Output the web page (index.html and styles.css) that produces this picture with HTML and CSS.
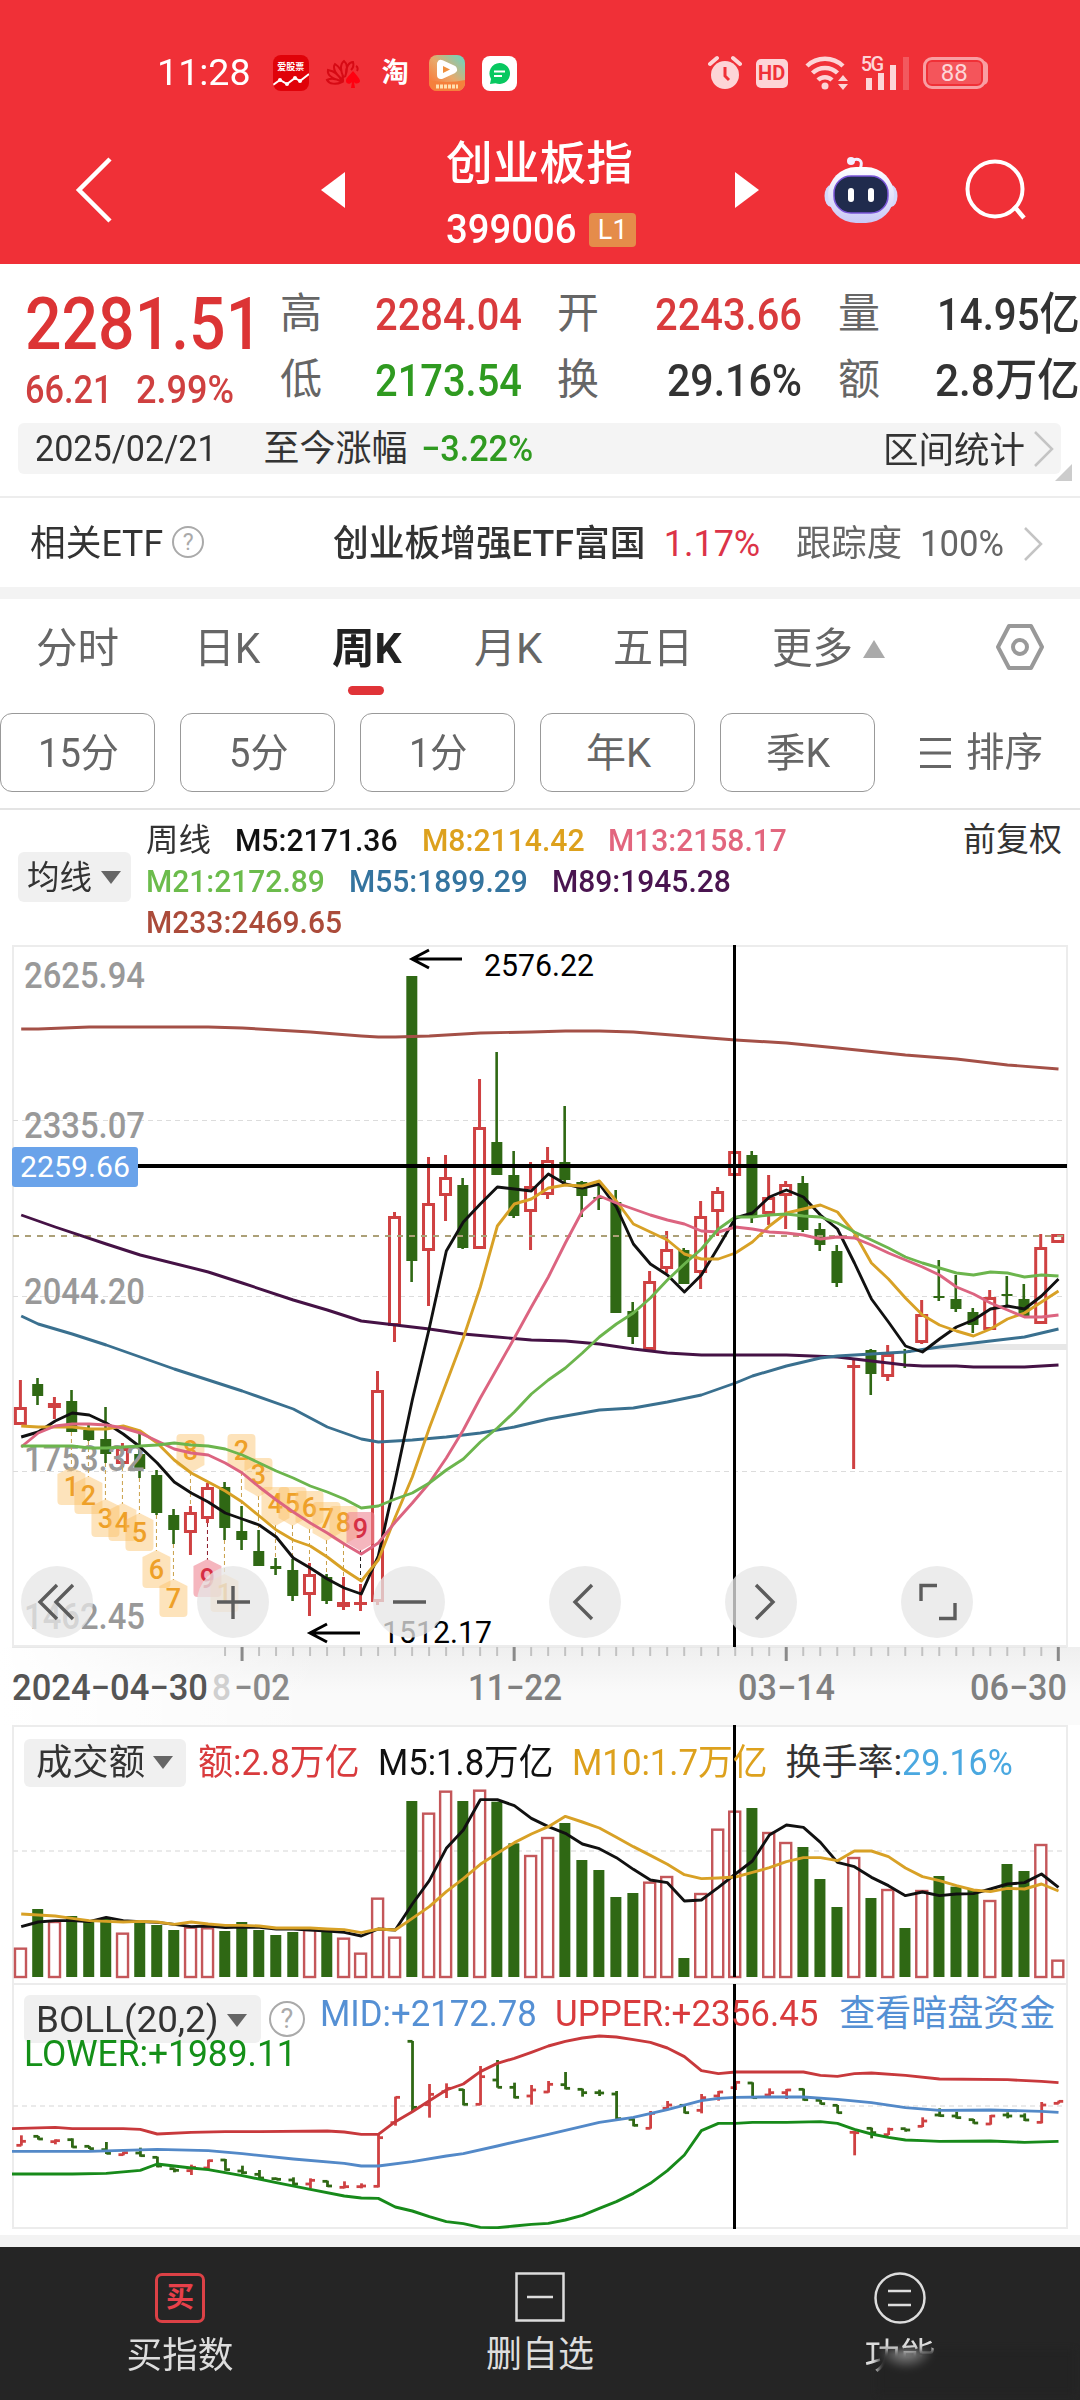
FILE: index.html
```html
<!DOCTYPE html>
<html lang="zh-CN">
<head>
<meta charset="utf-8">
<title>创业板指 399006</title>
<link rel="stylesheet" href="styles.css">
</head>
<body>
<header class="top">
  <div class="status">
    <span class="clock" data-w="94">11:28</span>
    <span class="app app-stock"><b>爱股票</b><svg width="36" height="18" viewBox="0 0 36 18"><path d="M0 13l7-5 7 4 8-6 5 3 9-7" fill="none" stroke="#fff" stroke-width="2"/><g fill="#fff"><circle cx="7" cy="8" r="2"/><circle cx="14" cy="12" r="2"/><circle cx="22" cy="6" r="2"/><circle cx="27" cy="9" r="2"/></g></svg></span>
    <svg class="petals" width="36" height="30" viewBox="0 0 36 30" fill="none" stroke="#d60a14" stroke-width="2"><path d="M17 24C11 27 4 26 2 22c4-2 10-1 15 2ZM17 23C8 21 2 17 3 12c6 1 11 5 14 11ZM18 22C11 17 7 10 10 6c5 3 8 9 8 16ZM19 20C15 13 15 6 19 3c4 3 4 8 1 16M21 15C21 9 24 4 28 4c1 3 0 6-2 8M31 8c2 1 2 3 1 5"/><path d="M28 13c-5 6-7 7-7 10s4 4 6 1l-1 6h4l-1-6c2 3 6 1 6-1s-2-4-7-10Z" fill="#ff0010" stroke="none"/></svg>
    <b class="tao">淘</b>
    <svg class="video" width="36" height="36" viewBox="0 0 36 36"><defs><linearGradient id="vg" x1="0" y1="1" x2="1" y2="0"><stop offset="0" stop-color="#ff6a2a"/><stop offset=".5" stop-color="#e9a86a"/><stop offset="1" stop-color="#62d8c8"/></linearGradient></defs><rect width="36" height="36" rx="8" fill="url(#vg)"/><path d="M0 25q18 4 36 0v3a8 8 0 0 1-8 8H8a8 8 0 0 1-8-8Z" fill="#f5803c"/><path d="M12 9v11l12-5.500Z" fill="none" stroke="#fff" stroke-width="8" stroke-linejoin="round"/><path d="M14 11v7l7-3.500Z" fill="#f0903e"/><path d="M7 31.500h22" stroke="#ffe0b0" stroke-width="4" stroke-dasharray="3 1"/></svg>
    <svg class="msg" width="35" height="35" viewBox="0 0 35 35"><rect width="35" height="35" rx="8" fill="#fff"/><path d="M17.500 7a10.500 10.500 0 1 1-4 20.200L8 28l1-5A10.500 10.500 0 0 1 17.500 7Z" fill="#07c860"/><path d="M12 15.500h11M12 20h8" stroke="#fff" stroke-width="2"/></svg>
    <div class="sys">
      <svg width="34" height="36" viewBox="0 0 34 36"><circle cx="17" cy="20" r="14" fill="#fdd5d7"/><path d="M2 9l7-6M32 9l-7-6" stroke="#fdd5d7" stroke-width="4" stroke-linecap="round"/><path d="M17 12v9l4 4" fill="none" stroke="#f03037" stroke-width="3"/></svg>
      <span class="hd">HD</span>
      <svg width="44" height="36" viewBox="0 0 44 36" fill="none" stroke="#fdd5d7" stroke-width="4.500"><path d="M2 11a26 26 0 0 1 36 0M7.500 18a18 18 0 0 1 25 0M13 25a10 10 0 0 1 14 0"/><circle cx="20" cy="31" r="3.500" fill="#fdd5d7" stroke="none"/><path d="M33 26l5-6 5 6ZM33 29l5 6 5-6Z" fill="#fdd5d7" stroke="none"/></svg>
      <div class="signal"><span>5G</span><svg width="48" height="36" viewBox="0 0 48 36" fill="#fdd5d7"><path d="M5 23h6v12H5zM17 18h6v17h-6zM29 10h6v25h-6z"/><path d="M42 2h6v33h-6z" opacity=".25"/></svg></div>
      <span class="battery">88</span>
    </div>
  </div>
  <nav class="nav">
    <svg class="back" width="38" height="66" viewBox="0 0 38 66"><path d="M35 2L4 33l31 31" fill="none" stroke="#fff" stroke-width="4.500"/></svg>
    <svg class="prev" width="24" height="36" viewBox="0 0 24 36"><path d="M24 0v36L0 18Z" fill="#fff"/></svg>
    <div class="title"><h1 data-w="187">创业板指</h1><div class="code"><span data-w="130">399006</span><i>L1</i></div></div>
    <svg class="next" width="24" height="36" viewBox="0 0 24 36"><path d="M0 0v36l24-18Z" fill="#fff"/></svg>
    <svg class="bot" width="74" height="68" viewBox="0 0 74 68"><defs><linearGradient id="bg" x1="0" y1="0" x2="0" y2="1"><stop offset="0" stop-color="#fff"/><stop offset="1" stop-color="#c9c8f6"/></linearGradient></defs><path d="M36 13c4-9-2-12-9-8" fill="none" stroke="#f3efff" stroke-width="3"/><circle cx="27" cy="5" r="4" fill="#f3efff"/><ellipse cx="7" cy="40" rx="6.500" ry="11" fill="#d5d8fb"/><ellipse cx="67" cy="40" rx="6.500" ry="11" fill="#d5d8fb"/><rect x="4" y="11" width="66" height="56" rx="28" fill="url(#bg)"/><rect x="10" y="20" width="54" height="37" rx="17" fill="#202b4d" stroke="#7a55d8" stroke-width="1.500"/><rect x="24" y="32" width="6" height="14" rx="3" fill="#fff"/><rect x="44" y="32" width="6" height="14" rx="3" fill="#fff"/></svg>
    <svg class="find" width="64" height="62" viewBox="0 0 64 62"><path d="M49 47l10 12" stroke="#fff" stroke-width="4.500"/><circle cx="30" cy="30" r="27.500" fill="none" stroke="#fff" stroke-width="4"/></svg>
  </nav>
</header>

<section class="quote">
  <div class="last"><strong data-w="237">2281.51</strong><div class="chg"><span data-w="88">66.21</span><span data-w="98">2.99%</span></div></div>
  <div class="stats">
    <label>高</label><span class="up" data-w="147">2284.04</span><label>开</label><span class="up" data-w="147">2243.66</span><label>量</label><span data-w="143">14.95亿</span>
    <label>低</label><span class="down" data-w="147">2173.54</span><label>换</label><span data-w="135">29.16%</span><label>额</label><span data-w="145">2.8万亿</span>
  </div>
</section>
<section class="range">
  <span data-w="182">2025/02/21</span><span data-w="144">至今涨幅</span><span class="down" data-w="112">−3.22%</span><span data-w="142">区间统计</span>
  <svg width="22" height="36" viewBox="0 0 22 36"><path d="M2 1l17 17L2 35" fill="none" stroke="#c4c4c4" stroke-width="2.500"/></svg>
  <svg class="corner" width="17" height="17" viewBox="0 0 17 17"><path d="M17 0v17H0Z" fill="#ccc"/></svg>
</section>
<section class="etf">
  <span data-w="133">相关ETF</span><span class="help">?</span><b data-w="312">创业板增强ETF富国</b><span class="pct" data-w="97">1.17%</span><span class="dim" data-w="106">跟踪度</span><span class="dim" data-w="84">100%</span>
  <svg width="20" height="34" viewBox="0 0 20 34"><path d="M2 1l16 16L2 33" fill="none" stroke="#c4c4c4" stroke-width="2.500"/></svg>
</section>
<section class="tabs">
  <span data-w="83">分时</span><span data-w="66">日K</span><b class="on"><span data-w="70">周K</span></b><span data-w="68">月K</span><span data-w="80">五日</span><span data-w="81">更多</span>
  <svg width="22" height="18" viewBox="0 0 22 18"><path d="M11 0l11 18H0Z" fill="#aaa"/></svg>
  <svg width="48" height="48" viewBox="0 0 48 48" fill="none" stroke="#999" stroke-width="4"><path d="M13 3h22l11 21-11 21H13L2 24Z" stroke-linejoin="round"/><circle cx="24" cy="24" r="7"/></svg>
</section>
<section class="chips">
  <div class="chip"><span data-w="81">15分</span></div><div class="chip"><span data-w="59">5分</span></div><div class="chip"><span data-w="58">1分</span></div><div class="chip"><span data-w="65">年K</span></div><div class="chip"><span data-w="64">季K</span></div>
  <div class="sort"><svg width="31" height="30" viewBox="0 0 31 30"><path d="M0 1.500h31M0 15h31M0 28.500h31" stroke="#666" stroke-width="3"/></svg><span data-w="77">排序</span></div>
</section>
<section class="legend">
  <div class="pick"><span data-w="65">均线</span><i></i></div>
  <div class="mas">
    <p><span class="c-txt" data-w="65">周线</span><span class="c-m5" data-w="163">M5:2171.36</span><span class="c-m8" data-w="163">M8:2114.42</span><span class="c-m13" data-w="179">M13:2158.17</span></p>
    <p><span class="c-m21" data-w="179">M21:2172.89</span><span class="c-m55" data-w="179">M55:1899.29</span><span class="c-m89" data-w="179">M89:1945.28</span></p>
    <p><span class="c-m233" data-w="196">M233:2469.65</span></p>
  </div>
  <span class="adj" data-w="99">前复权</span>
</section>

<section class="panel price">
  <svg id="price" width="1080" height="702" viewBox="0 945 1080 702"></svg>
  <i class="cross"></i>
  <div class="tools">
    <button><svg viewBox="0 0 72 72"><path d="M36 19L19 36l17 17M52 19L35 36l17 17"/></svg></button>
    <button><svg viewBox="0 0 72 72"><path d="M36 20v33M20 36h33"/></svg></button>
    <button><svg viewBox="0 0 72 72"><path d="M20 36h33"/></svg></button>
    <button><svg viewBox="0 0 72 72"><path d="M43 19L26 36l17 17"/></svg></button>
    <button><svg viewBox="0 0 72 72"><path d="M31 19l17 17-17 17"/></svg></button>
    <button><svg viewBox="0 0 72 72"><path d="M20 35V19.500h16M38 52.500h16V37"/></svg></button>
  </div>
</section>
<svg id="axis" class="axis" width="1080" height="78" viewBox="0 1647 1080 78"></svg>
<section class="panel volume">
  <svg id="volume" width="1080" height="259" viewBox="0 0 1080 259"></svg>
  <div class="head">
    <div class="pick"><span data-w="109">成交额</span><i></i></div><span class="c-up" data-w="162">额:2.8万亿</span><span class="c-m5" data-w="175">M5:1.8万亿</span><span class="c-m8" data-w="196">M10:1.7万亿</span><span class="c-txt" data-w="117">换手率:</span><span class="c-sky" data-w="111">29.16%</span>
  </div>
  <i class="cross"></i>
</section>
<section class="panel boll">
  <svg id="boll" width="1080" height="245" viewBox="0 0 1080 245"></svg>
  <div class="head">
    <div class="pick"><span data-w="183">BOLL(20,2)</span><i></i></div><span class="help">?</span><span class="c-blue" data-w="217">MID:+2172.78</span><span class="c-up" data-w="263">UPPER:+2356.45</span><span class="c-blue" data-w="216">查看暗盘资金</span>
    <span class="lower" data-w="273">LOWER:+1989.11</span>
  </div>
  <i class="cross"></i>
</section>
<footer class="bar">
  <div><span class="buy">买</span><em data-w="107">买指数</em></div>
  <div><svg width="50" height="50" viewBox="0 0 50 50"><path d="M1.500 1.500h47v47h-47zM12 25h26" fill="none" stroke="#ddd" stroke-width="2.500"/></svg><em data-w="108">删自选</em></div>
  <div><svg width="52" height="52" viewBox="0 0 52 52"><circle cx="26" cy="26" r="24.500" fill="none" stroke="#ddd" stroke-width="2.500"/><path d="M14 19h23M14 33h23" stroke="#ddd" stroke-width="2.500"/></svg><em data-w="71">功能</em><i class="smudge"></i></div>
</footer>
<script src="app.js"></script>
</body>
</html>
```
FILE: styles.css
```css
* { box-sizing: border-box; }
body { margin: 0; width: 1080px; height: 2400px; overflow: hidden; background: #fff; color: #333; font-family: Roboto, "Noto Sans CJK SC", sans-serif; font-size: 36px; line-height: 1; }
h1, p { margin: 0; font-weight: 400; }
i, em { font-style: normal; }
svg { display: block; flex: none; }
[data-w] { display: inline-block; white-space: nowrap; transform-origin: 0 50%; flex: none; }

.c-txt { color: #333; } .c-m5 { color: #111; } .c-m8 { color: #dda11d; } .c-m13 { color: #e2667e; }
.c-m21 { color: #6cbc4c; } .c-m55 { color: #34749f; } .c-m89 { color: #4a1450; } .c-m233 { color: #ab4b3a; }
.c-up, .up { color: #d93b3d; } .down { color: #2f9a20; } .c-blue { color: #5590d4; } .c-sky { color: #4aa8e0; }

.top { height: 264px; background: #f03037; color: #fff; }
.status { height: 129px; padding: 17px 0 0 157px; display: flex; align-items: center; }
.clock { font-size: 36px; font-weight: 400; }
.app-stock { width: 36px; height: 36px; margin-left: 22px; border-radius: 8px; background: #e00209; display: flex; flex-direction: column; align-items: center; overflow: hidden; padding-top: 7px; }
.app-stock b { font-size: 9px; line-height: 10px; white-space: nowrap; }
.petals { margin-left: 16px; }
.tao { margin-left: 21px; font-size: 27px; width: 27px; }
.video { margin-left: 20px; }
.msg { margin-left: 17px; }
.sys { margin-left: 191px; display: flex; align-items: center; color: #fdd5d7; }
.hd { margin: 0 17px 0 14px; width: 32px; height: 29px; border-radius: 5px; background: #fdd5d7; color: #f03037; font: 700 20px/29px Roboto, sans-serif; text-align: center; }
.signal { display: flex; margin-left: 12px; width: 48px; }
.signal span { width: 0; font-size: 20px; line-height: 18px; letter-spacing: -1.5px; white-space: nowrap; font-weight: 500; }
.battery { margin-left: 14px; width: 63px; height: 32px; border: 3px solid #f99ea2; border-radius: 9px; background: #f4555b; background-clip: content-box; padding: 2px; font-size: 24px; line-height: 23px; text-align: center; box-shadow: 6px 0 0 -4px #f99ea2; }
.nav { height: 134px; display: flex; align-items: center; padding-left: 75px; }
.nav > svg { margin-bottom: 12px; }
.prev { margin-left: 208px; }
.title { margin-left: 101px; width: 190px; padding-top: 3px; }
.title h1 { font-size: 46px; line-height: 64px; font-weight: 500; }
.code { display: flex; align-items: center; height: 70px; font-size: 40px; font-weight: 500; }
.code i { margin-left: 13px; width: 48px; height: 34px; border-radius: 4px; background: #e58c4a; font-size: 27px; line-height: 34px; font-weight: 400; text-align: center; }
.next { margin-left: 99px; }
.bot { margin-left: 65px; }
.find { margin-left: 67px; }

.quote { height: 159px; display: flex; padding-left: 25px; }
.last { width: 255px; padding-top: 27px; color: #dc3435; }
.last strong { font-size: 73px; line-height: 66px; font-weight: 500; }
.chg { display: flex; gap: 23px; font-size: 39px; line-height: 66px; font-weight: 500; color: #cf4040; }
.stats { padding-top: 17px; display: grid; grid-template-columns: 42px 200px 77px 203px 78px 200px; grid-auto-rows: 66px; align-items: center; justify-content: start; font-size: 45px; font-weight: 500; width: 800px; }
.stats label { font-size: 42px; font-weight: 400; color: #666; justify-self: end; }
.stats span { justify-self: end; transform-origin: 100% 50%; }
.range { position: relative; height: 51px; margin: 0 19px 0 18px; padding-left: 17px; display: flex; align-items: center; background: #f4f4f4; border-radius: 6px; font-size: 36px; }
.range span:nth-child(2) { margin-left: 47px; }
.range span:nth-child(3) { margin-left: 13px; font-weight: 500; }
.range span:nth-child(4) { margin-left: 350px; position: relative; top: 2px; }
.range svg:nth-child(5) { margin-left: 8px; }
.range .corner { position: absolute; left: 1037px; top: 41px; }
.etf { margin-top: 22px; height: 91px; border-top: 2px solid #ededed; padding: 2px 0 0 30px; display: flex; align-items: center; font-size: 36px; }
.help { width: 32px; height: 32px; border: 2px solid #aaa; border-radius: 50%; color: #aaa; font-size: 23px; line-height: 29px; text-align: center; flex: none; }
.etf .help { margin: 0 0 3px 9px; }
.etf b { margin-left: 129px; font-weight: 500; }
.pct { margin-left: 18px; color: #dc3348; }
.dim { color: #666; }
.pct + .dim { margin-left: 36px; }
.dim + .dim { margin-left: 18px; }
.etf svg { margin-left: 19px; }
.tabs { height: 112px; border-top: 12px solid #f3f3f3; padding: 0 0 1px 36px; display: flex; align-items: center; font-size: 42px; font-weight: 400; color: #666; }
.tabs > :nth-child(2) { margin-left: 75px; }
.tabs > :nth-child(3) { margin-left: 72px; }
.tabs > :nth-child(4) { margin-left: 72px; }
.tabs > :nth-child(5) { margin-left: 71px; }
.tabs > :nth-child(6) { margin-left: 79px; }
.tabs > :nth-child(7) { margin-left: 10px; }
.tabs > :nth-child(8) { margin-left: 111px; margin-bottom: 3px; }
.tabs .on { position: relative; font-weight: 700; color: #222; }
.tabs .on::after { content: ""; position: absolute; left: 16px; top: 58px; width: 36px; height: 9px; border-radius: 5px; background: #e03338; }
.chips { height: 111px; padding-top: 14px; border-bottom: 2px solid #e4e4e4; display: flex; gap: 25px; color: #666; font-size: 40px; font-weight: 400; }
.chip { width: 155px; height: 79px; border: 1.5px solid #999; border-radius: 12px; display: flex; align-items: center; justify-content: center; padding: 2px 0 0 2px; flex: none; }
.sort { height: 79px; display: flex; align-items: center; gap: 15px; margin-left: 20px; }
.legend { height: 135px; display: flex; padding: 9px 0 0 18px; }
.pick { display: flex; align-items: center; background: #f0f0f0; border-radius: 6px; color: #333; flex: none; }
.pick i { border: 10px solid transparent; border-top: 13px solid #666; border-bottom: 0; }
.legend .pick { width: 113px; height: 50px; margin-top: 33px; padding-left: 9px; gap: 9px; font-size: 33px; }
.mas { width: 832px; padding-left: 15px; font-size: 32px; flex: none; }
.mas p { height: 41px; display: flex; align-items: center; gap: 24px; font-weight: 500; }
.mas .c-txt { font-weight: 400; }
.adj { font-size: 33px; line-height: 41px; height: 41px; }

.panel { display: grid; }
.panel > * { grid-area: 1 / 1; }
.cross { width: 3px; height: 100%; margin-left: 733px; background: #000; }
.tools { display: flex; gap: 104px; align-self: end; padding: 0 0 9px 21px; }
.tools button { width: 72px; height: 72px; padding: 0; border: 0; border-radius: 50%; background: rgba(230, 230, 230, .76); }
.tools path { fill: none; stroke: #5c5c5c; stroke-width: 3.4; }
.axis { background: linear-gradient(90deg, #fff 0, #fff0 30%), linear-gradient(#efefef, #fafafa 60%, #fafafa); }
.volume .cross { height: 252px; }
.head { display: flex; align-items: center; align-content: start; font-size: 36px; }
.volume .head { height: 75px; padding-left: 24px; }
.volume .pick { width: 162px; height: 48px; padding-left: 12px; gap: 8px; margin-right: 12px; }
.volume .head .c-m5 { margin-left: 18px; }
.volume .head .c-m8 { margin-left: 19px; }
.volume .head .c-txt { margin-left: 18px; }
.boll .head { flex-wrap: wrap; padding: 11px 0 0 24px; height: 90px; }
.boll .pick { width: 237px; height: 48px; padding: 2px 0 0 12px; gap: 8px; }
.boll .help { width: 36px; height: 36px; margin: 0 15px 0 8px; font-size: 27px; line-height: 33px; }
.boll .head .c-blue, .boll .head .c-up { position: relative; top: -5px; }
.boll .head .c-up { margin-left: 18px; }
.boll .head .c-up + .c-blue { margin-left: 21px; }
.lower { color: #149018; margin-top: -7px; }
.bar { margin-top: 6px; border-top: 12px solid #f3f3f3; height: 165px; display: grid; grid-template-columns: repeat(3, 1fr); background: #252525; color: #ddd; }
.bar div { position: relative; display: flex; flex-direction: column; align-items: center; padding-top: 25px; }
.bar .buy { width: 50px; height: 50px; margin-top: 1px; border: 3px solid #dc4146; border-radius: 7px; color: #e8404a; font-size: 28px; line-height: 44px; font-weight: 700; text-align: center; }
.bar em { margin-top: 13px; font-size: 36px; line-height: 40px; font-weight: 400; }
.smudge { position: absolute; left: 158px; top: 103px; width: 196px; height: 44px; background: radial-gradient(ellipse 28px 20px at 28px 0, #999, #25252500), #232323; filter: blur(3px); }
```
FILE: app.js
```js
document.querySelectorAll('[data-w]').forEach(el => {
  const w = +el.dataset.w, natural = el.offsetWidth;
  const centred = el.tagName === 'EM';
  el.style.transform = `scaleX(${w / natural})`;
  if (centred) el.style.transformOrigin = '50% 50%';
  else if (getComputedStyle(el).justifySelf === 'end') el.style.marginLeft = `${w - natural}px`;
  else el.style.marginRight = `${w - natural}px`;
});

const STEP = 17.005, X0 = 20.4;
const RED = '#cf4142', GREEN = '#2f6814';
const cx = i => X0 + STEP * i;
const rect = (x, y, w, h, fill) => `<rect x="${x}" y="${y}" width="${w}" height="${h}" fill="${fill}"/>`;
const line = (x1, y1, x2, y2, c, w = 2, dash = '') => `<line x1="${x1}" y1="${y1}" x2="${x2}" y2="${y2}" stroke="${c}" stroke-width="${w}"${dash && ` stroke-dasharray="${dash}"`}/>`;
const text = (s, x, y, w, c, size = 36, extra = '') => `<text x="${x}" y="${y}" textLength="${w}" lengthAdjust="spacingAndGlyphs" font-size="${size}" fill="${c}" ${extra}>${s}</text>`;
const poly = (pts, c, w = 2.9) => `<polyline points="${pts.map(p => p.join()).join(' ')}" fill="none" stroke="${c}" stroke-width="${w}" stroke-linejoin="round"/>`;
const frame = (y, h) => `<rect x="13" y="${y}" width="1054" height="${h}" fill="none" stroke="#ececec" stroke-width="2"/>`;
const pairs = a => { const r = []; for (let k = 0; k < a.length; k += 2) r.push([cx(a[k]) + .8, a[k + 1]]); return r; };
const series = a => a.map((y, i) => [cx(i) + .8, y]);

// Candles: [colour, high, body top, body bottom, low]
const candles = [
 ['r',1380,1407,1425,1425],['g',1378,1384,1396,1405],['f',1397,1403,1408,1419],['g',1390,1401,1432,1432],['g',1425,1430,1440,1441],
 ['g',1407,1439,1454,1463],['r',1443,1448,1464,1467],['g',1430,1454,1469,1478],['g',1470,1475,1513,1515],['g',1509,1515,1530,1544],
 ['r',1506,1512,1533,1555],['r',1483,1487,1519,1523],['g',1482,1487,1528,1540],['g',1506,1531,1540,1550],['g',1530,1551,1566,1566],
 ['g',1558,1566,1569,1575],['g',1559,1570,1596,1601],['r',1563,1574,1595,1616],['g',1574,1577,1601,1604],['f',1577,1602,1607,1610],
 ['f',1584,1602,1605,1611],['r',1371,1390,1602,1605],['r',1212,1216,1326,1342],['g',976,976,1261,1282],['r',1157,1203,1251,1306],
 ['r',1155,1177,1196,1221],['g',1178,1185,1248,1249],['r',1079,1127,1249,1249],['g',1052,1142,1175,1175],['g',1151,1175,1216,1218],
 ['r',1162,1186,1212,1250],['r',1147,1160,1195,1199],['g',1106,1162,1180,1183],['g',1181,1182,1196,1217],['g',1183,1197,1199,1210],
 ['g',1190,1202,1313,1313],['g',1302,1311,1337,1344],['r',1271,1281,1350,1350],['r',1231,1249,1269,1273],['g',1248,1250,1284,1284],
 ['r',1201,1216,1273,1289],['r',1187,1191,1212,1236],['r',1151,1151,1176,1176],['g',1151,1155,1218,1223],['r',1175,1197,1214,1225],
 ['r',1181,1184,1196,1229],['g',1176,1183,1230,1232],['g',1223,1229,1245,1251],['g',1245,1251,1283,1287],['f',1358,1365,1368,1469],
 ['g',1349,1350,1374,1395],['r',1345,1354,1377,1381],['g',1349,1351,1353,1368],['r',1300,1314,1343,1344],['g',1260,1296,1298,1301],
 ['g',1275,1299,1309,1312],['g',1308,1312,1325,1333],['r',1290,1297,1330,1330],['g',1276,1294,1296,1305],['g',1284,1299,1316,1316],
 ['r',1234,1247,1324,1324],['r',1234,1234,1243,1243]];

const ma5 = [1437,1432,1421,1413,1415,1423,1434,1447,1463,1482,1493,1502,1513,1519,1525,1537,1558,1568,1579,1588,1594,1556,1480,1400,1328,1251,1222,1204,1187,1189,1191,1174,1184,1188,1184,1207,1244,1264,1275,1292,1275,1247,1218,1213,1197,1190,1197,1215,1229,1263,1299,1322,1346,1352,1339,1327,1320,1309,1306,1309,1296,1279];
const ma8 = [1426,1427,1427,1427,1429,1429,1426,1431,1443,1460,1473,1482,1491,1502,1516,1530,1540,1546,1557,1570,1581,1560,1517,1477,1428,1383,1338,1287,1226,1204,1199,1188,1185,1186,1181,1201,1224,1232,1240,1254,1259,1259,1253,1242,1226,1213,1209,1205,1212,1233,1263,1279,1298,1315,1325,1331,1336,1329,1319,1313,1302,1291];
const ma13 = [1447,1433,1426,1424,1424,1425,1428,1433,1441,1449,1453,1455,1463,1473,1487,1500,1512,1523,1533,1544,1554,1543,1522,1503,1483,1458,1430,1398,1368,1338,1307,1277,1243,1211,1196,1203,1209,1215,1220,1224,1231,1232,1227,1229,1232,1233,1235,1239,1237,1238,1245,1253,1260,1267,1275,1287,1294,1303,1310,1317,1317,1315];
const ma21 = [1446,1446,1446,1446,1448,1448,1447,1446,1445,1443,1445,1446,1449,1455,1463,1471,1478,1486,1492,1499,1508,1506,1499,1493,1483,1470,1459,1442,1428,1412,1394,1380,1368,1353,1337,1324,1313,1298,1280,1264,1249,1229,1217,1217,1215,1214,1216,1217,1223,1232,1240,1248,1257,1263,1268,1273,1275,1272,1273,1277,1275,1276];
const ma55 = [0,1316,1,1324,3,1334,5,1345,9,1369,13,1391,16,1409,18,1427,20,1439,21,1442,23,1440,25,1437,27,1433,29,1427,31,1419,33,1413,34,1410,36,1408,38,1402,40,1395,42,1383,43,1376,45,1366,47,1358,48,1356,50,1354,52,1352,54,1347,55,1345,57,1341,59,1337,61,1329];
const ma89 = [0,1215,2,1227,5,1244,7,1255,11,1272,13,1283,16,1300,18,1310,20,1321,22,1325,24,1329,26,1334,28,1337,30,1340,32,1341,34,1344,36,1349,38,1353,40,1355,45,1355,48,1357,50,1361,52,1365,53,1366,55,1366,56,1367,59,1367,61,1365];
const ma233 = [0,1029,1,1029,4,1027,11,1027,13,1028,17,1032,20,1036,21,1037,22,1037,24,1036,27,1033,30,1032,32,1031,34,1031,36,1032,39,1036,42,1040,45,1043,48,1048,52,1055,55,1059,58,1065,61,1069];

// Nine-turn marks: [index, digit, box top, hangs below the candle]
const marks = [[3,1,1470,1],[4,2,1479,1],[5,3,1502,1],[6,4,1506,1],[7,5,1516,1],[8,6,1553,1],[9,7,1582,1],[10,8,1434,0],[11,9,1562,1],[12,1,1577,1],
 [13,2,1434,0],[14,3,1458,0],[15,4,1487,0],[16,5,1487,0],[17,6,1491,0],[18,7,1502,0],[19,8,1506,0],[20,9,1512,0]];

function candle([k, hi, top, bot, lo], i) {
  const x = cx(i);
  if (k === 'g') return rect(x - 1.2, hi, 2.6, lo - hi, GREEN) + rect(x + .3 - 5.5, top, 11, bot - top, GREEN);
  if (k === 'f') return rect(x - 1.5, hi, 3, lo - hi, RED) + rect(x - 6.5, top, 13, bot - top, RED);
  return rect(x - 1.5, hi, 3, top - hi, RED) + rect(x - 1.5, bot, 3, lo - bot, RED) +
    `<rect x="${x - 5}" y="${top + 1.5}" width="10" height="${Math.max(bot - top - 3, 2)}" fill="#fff" stroke="${RED}" stroke-width="3"/>`;
}

function mark([i, n, y, below]) {
  const x = cx(i), nine = n === 9, ink = nine ? '#d62f45' : '#eea028';
  const shape = below
    ? `M${x-14} ${y+4}l14-7 14 7v27q0 4-4 4h-20q-4 0-4-4z`
    : `M${x-14} ${y+4}q0-4 4-4h20q4 0 4 4v27l-14 8-14-8z`;
  const [, hi, , , lo] = candles[i];
  const dash = below ? line(x, lo, x, y - 2, nine ? '#8a1a2a' : '#c9a04a', 1, '4 3') : line(x, y + 38, x, hi, nine ? '#222' : '#c9a04a', 1, '4 3');
  return dash + `<path d="${shape}" fill="${nine ? '#ee8593' : '#fbbd61'}" opacity="${nine ? .6 : .43}"/>` +
    `<text x="${x}" y="${y + 26}" text-anchor="middle" font-size="27" font-weight="500" fill="${ink}">${n}</text>`;
}

const arrow = (x, y) => `<path d="M${x + 51} ${y}H${x + 2}M${x + 18} ${y - 9}L${x + 1} ${y}l17 9" fill="none" stroke="#000" stroke-width="3"/>`;
const MEDIUM = 'font-weight="500"';

document.getElementById('price').innerHTML =
  frame(946, 700) +
  [1120.5, 1296.5, 1471.5].map(y => line(13, y, 1066, y, '#dcdcdc', 1.2, '5 4')).join('') +
  line(930, 1347, 1067, 1347, '#e7e7e7', 6) +
  candles.map(candle).join('') +
  line(13, 1236, 1066, 1236, '#aca078', 1.8, '6 6') +
  [['2625.94',988],['2335.07',1138],['2044.20',1304],['1753.32',1471],['1462.45',1629]].map(([s, y]) => text(s, 24, y, 121, '#999', 36, MEDIUM)).join('') +
  marks.map(mark).join('') +
  poly(pairs(ma233), '#a45047') + poly(pairs(ma89), '#451245') + poly(pairs(ma55), '#3a708f') +
  poly(series(ma5), '#111') + poly(series(ma8), '#d8a126') + poly(series(ma13), '#dc6480') + poly(series(ma21), '#6cb54d') +
  line(13, 1166, 1067, 1166, '#000', 3.8) +
  `<rect x="12" y="1147" width="126" height="40" rx="3" fill="#6aa3ea"/>` + text('2259.66', 20, 1177, 110, '#fff', 30) +
  arrow(411, 959) + text('2576.22', 484, 976, 110, '#000', 31) +
  arrow(309, 1633) + text('1512.17', 382, 1643, 110, '#000', 31);

let axis = line(12, 1647, 1067, 1647, '#e8e8e8', 2);
for (let i = 12; i < 62; i++) {
  const major = (i - 13) % 16 === 0;
  axis += line(cx(i) + .6, 1647, cx(i) + .6, major ? 1661 : 1656, major ? '#8a8a8a' : '#c2c2c2', major ? 3 : 2);
}
document.getElementById('axis').innerHTML = axis +
  text('2024−04−30', 12, 1700, 196, '#555', 36, MEDIUM) + text('8', 212, 1700, 19, '#d0d0d0', 36, MEDIUM) + text('−02', 234, 1700, 56, '#8a8a8a', 36, MEDIUM) +
  text('11−22', 468, 1700, 94, '#808080', 36, MEDIUM) + text('03−14', 738, 1700, 97, '#808080', 36, MEDIUM) + text('06−30', 970, 1700, 97, '#808080', 36, MEDIUM);

// Turnover bars: colour plus top edge, in thirds of a pixel
const vols = 'r713 g597 r633 g618 g633 g627 r668 g635 g645 g660 r650 r652 g663 g636 g660 g675 g666 r657 g663 r683 r728 r563 r680 g273 r308 r242 g273 r239 g275 g400 r435 r381 g339 g450 g480 g561 g549 r515 r498 g744 r549 r356 r302 g294 r366 r396 g411 g507 g591 r441 g564 r537 g654 r540 g498 g530 g540 r570 g462 g483 r402 r749'.split(' ');
const v5 = [650,636,632,632,635,622,632,635,637,643,650,648,653,651,652,657,657,660,663,667,678,657,660,582,512,415,360,269,269,287,325,350,370,402,416,443,478,510,518,573,570,532,492,453,375,345,352,397,457,470,502,527,557,546,557,552,551,537,522,518,492,532];
const v10 = [612,615,618,625,632,634,636,634,636,643,636,642,646,646,648,654,654,654,657,659,668,657,660,625,590,545,506,463,430,398,372,350,319,336,354,382,410,436,463,494,506,504,501,487,473,455,443,443,452,423,423,440,474,500,512,527,540,545,535,537,522,543];
const vy = v => v / 3 - 15;
document.getElementById('volume').innerHTML = frame(1, 258) + line(13, 126, 1066, 126, '#e4e4e4', 1.5, '5 4') +
  vols.map((s, i) => {
    const y = vy(+s.slice(1)), x = cx(i);
    return s[0] === 'g' ? rect(x - 5.2, y, 11, 252 - y, GREEN)
      : `<rect x="${x - 5.4}" y="${y + 1}" width="11" height="${251 - y}" fill="#fff" stroke="#c4575a" stroke-width="2.4"/>`;
  }).join('') + poly(series(v5.map(vy)), '#111') + poly(series(v10.map(vy)), '#d8a126');

// Bollinger bars: colour, high, low, open, close
const bars = `r466,497,496,484 g468,479,469,477 r478,493,485,482 g475,503,479,501 g498,507,499,506 g486,522,509,520 r515,526,524,518 g503,530,519,527 g530,562,532,558 g565,577,566,571 r554,585,572,562 r539,568,564,542 g537,572,540,569 g557,582,573,578 g570,597,583,594 g593,600,596,598 g592,618,600,612 r595,625,612,601 g602,621,604,618 r604,625,622,620 r610,625,620,618 r462,622,619,473 r350,437,428,352 g183,395,184,382 r312,413,374,343 r310,354,335,325 g327,376,329,373 r258,375,373,290 g240,323,300,322 g308,355,322,352 r315,374,348,330 r303,338,336,313 g276,328,314,325 g326,350,328,338 g329,348,338,339 g333,418,342,416 g415,439,418,436 r393,446,445,400 r363,386,385,375 g375,400,376,398 r342,400,391,353 r333,362,348,336 r307,330,323,307 g307,355,309,353 r325,350,345,338 r327,357,338,330 g326,362,328,359 g360,373,361,371 g375,400,376,398 r453,526,457,458 g443,475,445,458 r443,465,464,448 g446,455,446,450 r412,441,439,423 g385,410,405,407 g395,416,408,413 g417,431,419,429 r405,434,432,408 g397,415,405,408 g400,423,408,420 r366,430,427,375 r362,371,370,364`.split(' ');
const by = v => v / 3 - 4;
const band = (a, c) => poly(pairs(a).map(([x, y]) => [Math.max(x, 12), by(y)]), c);
const upper = [-1,446,2,442,3,446,6,446,7,448,8,462,10,457,12,455,14,455,18,453,19,456,20,463,21,463,22,425,23,395,24,362,25,330,26,312,27,275,28,250,29,235,30,217,31,198,32,184,33,174,34,168,35,171,36,179,37,187,38,204,39,230,40,272,41,281,42,276,46,276,47,286,48,289,49,281,50,279,52,286,54,297,58,299,60,304,61,308];
const mid = [-1,514,4,514,6,511,8,508,11,512,13,521,16,537,19,550,20,558,21,558,23,545,25,528,26,521,28,498,31,463,34,427,36,412,38,389,40,362,41,355,42,352,44,351,46,351,48,358,50,368,52,383,54,391,57,390,60,394,61,397];
const lower = [-1,582,3,582,5,580,7,571,8,552,10,564,11,569,13,587,15,608,17,628,19,648,20,654,21,655,22,681,23,693,24,710,25,725,26,731,27,742,28,743,29,738,30,733,31,730,32,720,33,706,34,685,35,665,36,640,37,610,38,572,39,525,40,452,41,430,42,430,43,427,45,427,47,425,48,430,49,448,50,462,51,472,52,480,53,482,54,484,57,483,59,487,61,484];
document.getElementById('boll').innerHTML = frame(0, 244) + line(13, 122, 1066, 122, '#e4e4e4', 1.5, '5 4') +
  bars.map((s, i) => {
    const c = s[0] === 'g' ? GREEN : RED, [h, l, o, cl] = s.slice(1).split(',').map(v => by(+v)), x = cx(i) + 1;
    return line(x, h, x, l, c, 2.8) + line(x - 5, o, x, o, c, 2.8) + line(x, cl, x + 4.5, cl, c, 2.8);
  }).join('') + band(upper, '#c8393c') + band(mid, '#5389c8') + band(lower, '#178a1a');
```
